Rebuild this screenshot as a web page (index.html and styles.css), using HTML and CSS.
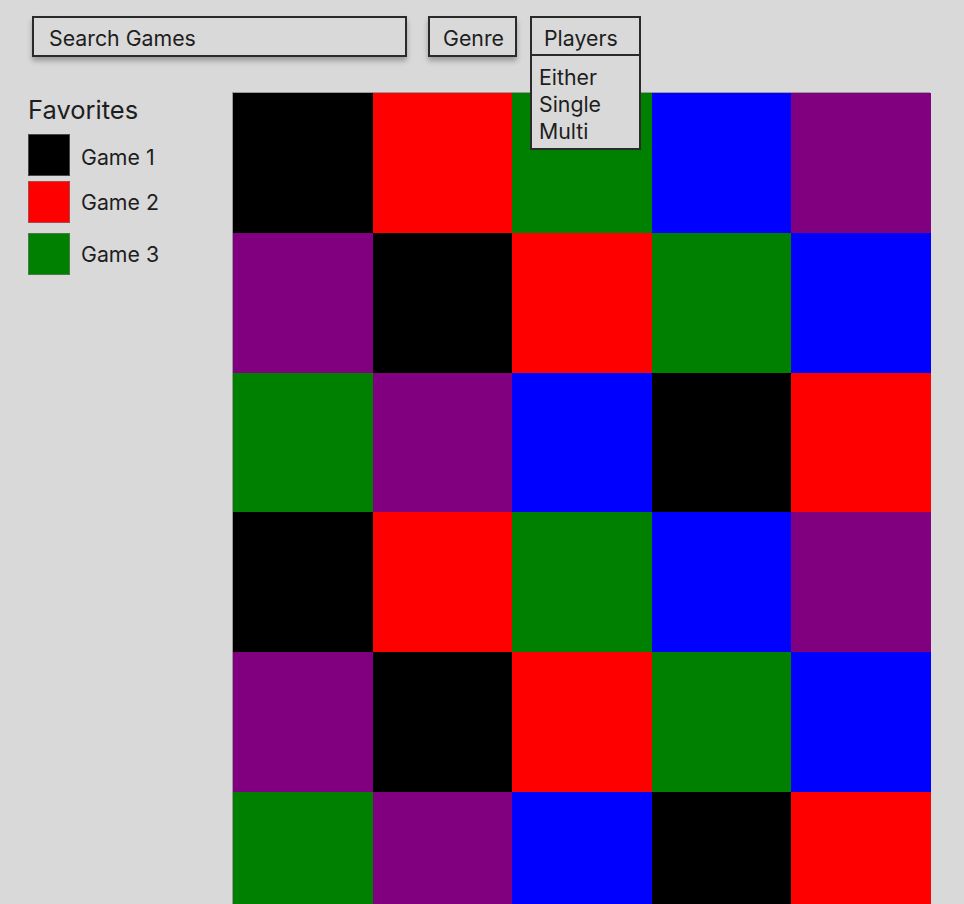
FILE: index.html
```html
<!DOCTYPE html>
<html>
<head>
<meta charset="utf-8">
<link rel="stylesheet" href="styles.css">
</head>
<body>
<header class="toolbar">
  <div class="search">Search Games</div>
  <div class="btn genre">Genre</div>
  <div class="players">
    <div class="players-head">Players</div>
    <ul class="menu">
      <li>Either</li>
      <li>Single</li>
      <li>Multi</li>
    </ul>
  </div>
</header>
<main class="main">
  <aside class="sidebar">
    <h2 class="fav-title">Favorites</h2>
    <div class="fav fav1"><span class="swatch black"></span><span class="fav-label">Game 1</span></div>
    <div class="fav fav2"><span class="swatch red"></span><span class="fav-label">Game 2</span></div>
    <div class="fav fav3"><span class="swatch green"></span><span class="fav-label">Game 3</span></div>
  </aside>
  <section class="grid">
    <div class="cell black"></div><div class="cell red"></div><div class="cell green"></div><div class="cell blue"></div><div class="cell purple"></div>
    <div class="cell purple"></div><div class="cell black"></div><div class="cell red"></div><div class="cell green"></div><div class="cell blue"></div>
    <div class="cell green"></div><div class="cell purple"></div><div class="cell blue"></div><div class="cell black"></div><div class="cell red"></div>
    <div class="cell black"></div><div class="cell red"></div><div class="cell green"></div><div class="cell blue"></div><div class="cell purple"></div>
    <div class="cell purple"></div><div class="cell black"></div><div class="cell red"></div><div class="cell green"></div><div class="cell blue"></div>
    <div class="cell green"></div><div class="cell purple"></div><div class="cell blue"></div><div class="cell black"></div><div class="cell red"></div>
  </section>
</main>
</body>
</html>
```
FILE: styles.css
```css
* { box-sizing: border-box; }
html, body {
  margin: 0;
  padding: 0;
  background: #d9d9d9;
  font-family: Inter, "Noto Sans", sans-serif;
  color: #1e1e1e;
  overflow: hidden;
}
.toolbar {
  display: flex;
  align-items: flex-start;
  padding: 16px 0 0 32px;
  height: 93px;
}
.search, .btn, .players-head {
  height: 41px;
  border: 2px solid #2a2a2a;
  font-size: 21.3px;
  line-height: 37px;
  padding-top: 2px;
  background: #d9d9d9;
}
.search {
  width: 375px;
  padding-left: 15px;
  box-shadow: 0 4px 5px rgba(0,0,0,0.28);
}
.genre {
  margin-left: 21px;
  width: 89px;
  padding-left: 13px;
  box-shadow: 0 4px 5px rgba(0,0,0,0.28);
}
.players {
  position: relative;
  margin-left: 13px;
  width: 111px;
}
.players-head {
  padding-left: 12px;
  height: 40px;
  line-height: 36px;
}
.menu {
  position: absolute;
  left: 0;
  top: 38px;
  width: 111px;
  margin: 0;
  padding: 8px 0 3px 7px;
  list-style: none;
  border: 2px solid #2a2a2a;
  background: #d9d9d9;
  z-index: 2;
  font-size: 21.3px;
  line-height: 27px;
}
.main {
  display: flex;
  align-items: flex-start;
}
.sidebar {
  width: 233px;
  padding-left: 28px;
}
.fav-title {
  margin: 0;
  padding-top: 2px;
  font-size: 25.5px;
  font-weight: 400;
  line-height: 29px;
  height: 41px;
}
.fav {
  display: flex;
  align-items: center;
  height: 42px;
}
.fav2 { margin-top: 5px; }
.fav3 { margin-top: 10px; }
.swatch {
  width: 42px;
  height: 42px;
  border: 1px solid rgba(120,120,120,0.6);
}
.fav-label {
  margin-left: 11px;
  font-size: 21.3px;
  padding-top: 0;
}
.fav1 .fav-label { padding-top: 3px; }
.grid {
  display: grid;
  grid-template-columns: repeat(5, 139.6px);
  grid-auto-rows: 139.8px;
  width: 698px;
  border-top: 1px solid #9a9a9a;
  border-left: 1px solid #9a9a9a;
  margin-top: -1px;
  margin-left: -1px;
}
.black { background: #000000; }
.red { background: #ff0000; }
.green { background: #008000; }
.blue { background: #0000ff; }
.purple { background: #800080; }
```
